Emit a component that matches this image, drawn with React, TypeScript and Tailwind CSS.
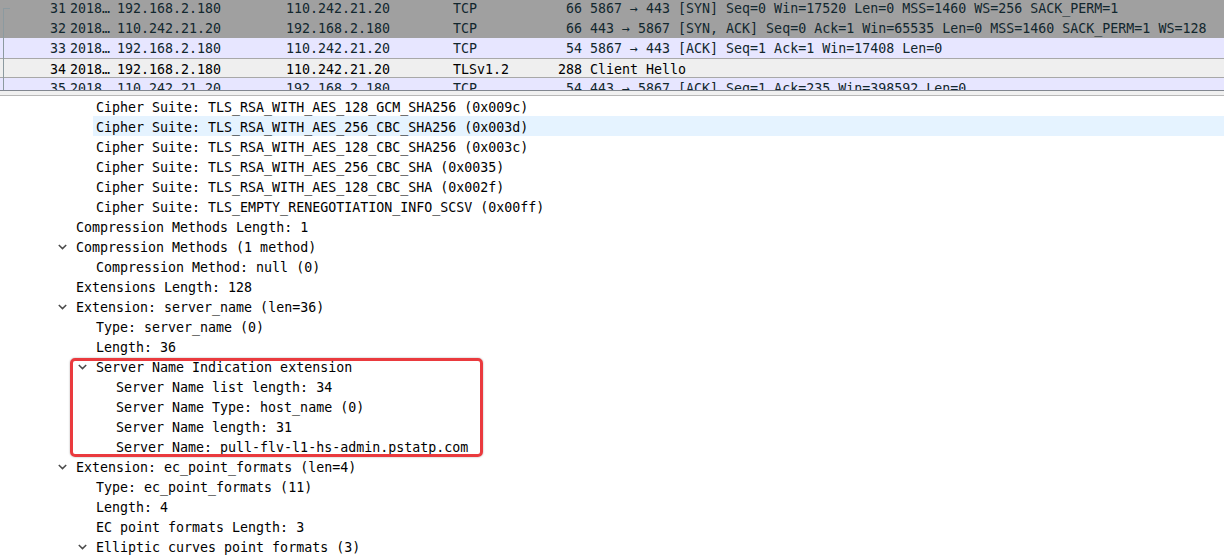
import React from "react";

type Pkt = {
  no: string;
  src: string;
  dst: string;
  proto: string;
  len: string;
  info: string;
  row: string;
};

const packets: Pkt[] = [
  { no: "31", src: "192.168.2.180", dst: "110.242.21.20", proto: "TCP", len: "66", info: "5867 → 443 [SYN] Seq=0 Win=17520 Len=0 MSS=1460 WS=256 SACK_PERM=1", row: "bg-[#a0a0a0] text-[#12272e]" },
  { no: "32", src: "110.242.21.20", dst: "192.168.2.180", proto: "TCP", len: "66", info: "443 → 5867 [SYN, ACK] Seq=0 Ack=1 Win=65535 Len=0 MSS=1460 SACK_PERM=1 WS=128", row: "bg-[#a0a0a0] text-[#12272e]" },
  { no: "33", src: "192.168.2.180", dst: "110.242.21.20", proto: "TCP", len: "54", info: "5867 → 443 [ACK] Seq=1 Ack=1 Win=17408 Len=0", row: "bg-[#e7e6ff] text-[#12272e]" },
  { no: "34", src: "192.168.2.180", dst: "110.242.21.20", proto: "TLSv1.2", len: "288", info: "Client Hello", row: "bg-[#efefef] text-black border-y border-[#a8a8a8]" },
  { no: "35", src: "110.242.21.20", dst: "192.168.2.180", proto: "TCP", len: "54", info: "443 → 5867 [ACK] Seq=1 Ack=235 Win=398592 Len=0", row: "bg-[#e7e6ff] text-[#12272e]" },
];

type Line = { level: 1 | 2 | 3; text: string; chev?: boolean; sel?: boolean };

const lines: Line[] = [
  { level: 2, text: "Cipher Suite: TLS_RSA_WITH_AES_128_GCM_SHA256 (0x009c)" },
  { level: 2, text: "Cipher Suite: TLS_RSA_WITH_AES_256_CBC_SHA256 (0x003d)", sel: true },
  { level: 2, text: "Cipher Suite: TLS_RSA_WITH_AES_128_CBC_SHA256 (0x003c)" },
  { level: 2, text: "Cipher Suite: TLS_RSA_WITH_AES_256_CBC_SHA (0x0035)" },
  { level: 2, text: "Cipher Suite: TLS_RSA_WITH_AES_128_CBC_SHA (0x002f)" },
  { level: 2, text: "Cipher Suite: TLS_EMPTY_RENEGOTIATION_INFO_SCSV (0x00ff)" },
  { level: 1, text: "Compression Methods Length: 1" },
  { level: 1, text: "Compression Methods (1 method)", chev: true },
  { level: 2, text: "Compression Method: null (0)" },
  { level: 1, text: "Extensions Length: 128" },
  { level: 1, text: "Extension: server_name (len=36)", chev: true },
  { level: 2, text: "Type: server_name (0)" },
  { level: 2, text: "Length: 36" },
  { level: 2, text: "Server Name Indication extension", chev: true },
  { level: 3, text: "Server Name list length: 34" },
  { level: 3, text: "Server Name Type: host_name (0)" },
  { level: 3, text: "Server Name length: 31" },
  { level: 3, text: "Server Name: pull-flv-l1-hs-admin.pstatp.com" },
  { level: 1, text: "Extension: ec_point_formats (len=4)", chev: true },
  { level: 2, text: "Type: ec_point_formats (11)" },
  { level: 2, text: "Length: 4" },
  { level: 2, text: "EC point formats Length: 3" },
  { level: 2, text: "Elliptic curves point formats (3)", chev: true },
];

const indent: Record<number, string> = {
  1: "pl-[58px]",
  2: "pl-[78px]",
  3: "pl-[98px]",
};

function Chevron() {
  return (
    <svg width="9" height="6" viewBox="0 0 9 6" className="block">
      <path d="M0.8 1 L4.5 4.6 L8.2 1" fill="none" stroke="#4a4a4a" strokeWidth="1.5" />
    </svg>
  );
}

export default function App() {
  return (
    <div
      className="w-[1224px] h-[555px] overflow-hidden bg-white text-[13.3px] leading-[20px]"
      style={{ fontFamily: '"DejaVu Sans Mono", monospace' }}
    >
      {/* packet list */}
      <div className="relative h-[91px] overflow-hidden border-b border-[#828790]">
        <div className="-mt-[2px]">
          {packets.map((p) => (
            <div key={p.no} className={`flex h-[20px] items-start pt-[1px] whitespace-pre ${p.row}`}>
              <div className="w-[66px] text-right">{p.no}</div>
              <div className="w-[51px] pl-[4px]">2018…</div>
              <div className="w-[169px]">{p.src}</div>
              <div className="w-[167px]">{p.dst}</div>
              <div className="w-[97px]">{p.proto}</div>
              <div className="w-[32px] text-right">{p.len}</div>
              <div className="pl-[8px]">{p.info}</div>
            </div>
          ))}
        </div>
        <div className="absolute left-[3px] top-[8px] h-[90px] w-[7px] border-l border-t border-[#8c9aa0]" />
      </div>
      <div className="h-[5px] bg-[#f0f0f0] border-b border-[#b8b8b8]" />

      {/* detail tree */}
      <div className="relative text-black">
        {lines.map((l, i) => (
          <div key={i} className={`flex h-[20px] items-stretch whitespace-pre ${indent[l.level]}`}>
            <div className="flex w-[15px] items-center pt-[2px]">{l.chev ? <Chevron /> : null}</div>
            <div className={`flex-1 pl-[3px] pt-[3px] leading-[17px] ${l.sel ? "bg-[#e5f3ff]" : ""}`}>{l.text}</div>
          </div>
        ))}
        <div className="absolute left-[70px] top-[262px] h-[99px] w-[413px] rounded-[5px] border-[3px] border-[#ea3a3e] shadow-[0_0_2px_rgba(0,0,0,0.35)]" />
      </div>
    </div>
  );
}
